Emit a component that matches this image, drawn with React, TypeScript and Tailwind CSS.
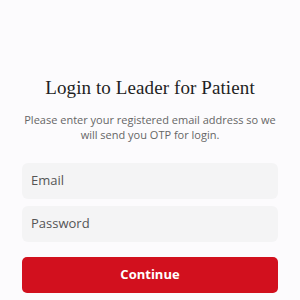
export default function App() {
  return (
    <div className="w-[300px] h-[300px] bg-[#fcfbfd] flex flex-col items-center overflow-hidden">
      <h1
        className="mt-[75px] text-[19px] leading-[25px] text-[#1f1f1f] tracking-[0.1px]"
        style={{ fontFamily: '"Liberation Serif", serif' }}
      >
        Login to Leader for Patient
      </h1>
      <p
        className="mt-[12px] text-[11px] leading-[15px] text-[#666] text-center w-[252px]"
        style={{ fontFamily: '"Open Sans", sans-serif' }}
      >
        Please enter your registered email address so we will send you OTP for login.
      </p>
      <div className="mt-[21px] w-[256px] flex flex-col gap-[7px]" style={{ fontFamily: '"Open Sans", sans-serif' }}>
        <div className="h-[36px] rounded-[6px] bg-[#f4f4f5] flex items-center px-[9px] text-[13px] text-[#555]">Email</div>
        <div className="h-[36px] rounded-[6px] bg-[#f4f4f5] flex items-center px-[9px] text-[13px] text-[#555]">Password</div>
        <button className="mt-[8px] h-[36px] rounded-[5px] bg-[#d2101e] text-white font-bold text-[13px]">Continue</button>
      </div>
    </div>
  );
}
